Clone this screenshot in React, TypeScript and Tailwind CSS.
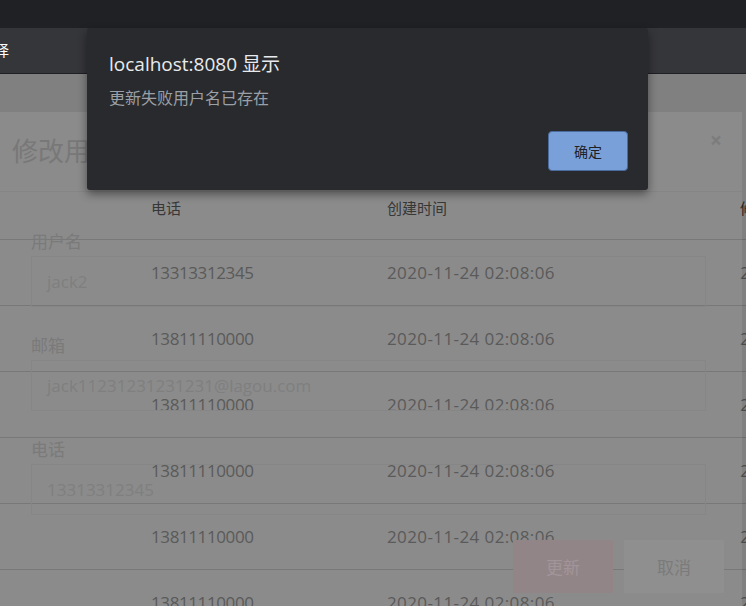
const rows = [
  { phone: "13313312345", time: "2020-11-24 02:08:06" },
  { phone: "13811110000", time: "2020-11-24 02:08:06" },
  { phone: "13811110000", time: "2020-11-24 02:08:06" },
  { phone: "13811110000", time: "2020-11-24 02:08:06" },
  { phone: "13811110000", time: "2020-11-24 02:08:06" },
  { phone: "13811110000", time: "2020-11-24 02:08:06" },
];

const fields = [
  { label: "用户名", value: "jack2", last: false },
  { label: "邮箱", value: "jack11231231231231@lagou.com", last: false },
  { label: "电话", value: "13313312345", last: true },
];

const App = () => {
  return (
    <div className="relative h-[606px] w-full overflow-hidden bg-[#808080] font-['Open_Sans','Noto_Sans_CJK_SC',sans-serif]">
      {/* top bars */}
      <div className="h-[28px] bg-[#202124]" />
      <div className="flex h-[46px] items-center overflow-hidden border-b border-[#1f2023] bg-[#35363a]">
        <span className="-ml-[21px] font-['Noto_Sans_CJK_SC',sans-serif] text-[15px] text-white">选择</span>
      </div>

      {/* Table behind the modal */}
      <div className="pt-[104px]">
        <div className="flex h-[62px] items-center border-b border-[#6b6b6b] font-['Noto_Sans_CJK_SC',sans-serif] text-[15px] text-[#242424]">
          <div className="w-[387px] shrink-0 pl-[151px]">电话</div>
          <div className="w-[353px] shrink-0">创建时间</div>
          <div className="whitespace-nowrap">修改</div>
        </div>
        {rows.map((row, index) => (
          <div
            key={index}
            className="flex h-[66px] items-center border-b border-[#6b6b6b] text-[17px] text-[#4a4a4a]"
          >
            <div className="w-[387px] shrink-0 pl-[151px] tracking-[-0.4px]">{row.phone}</div>
            <div className="w-[353px] shrink-0 tracking-[0.4px]">{row.time}</div>
            <div className="whitespace-nowrap">{row.time}</div>
          </div>
        ))}
      </div>

      {/* Modal (fading in) */}
      <div className="absolute bottom-0 left-0 top-[112px] w-[742px] bg-white/[0.09]">
        {/* Header */}
        <div className="flex h-[80px] items-start justify-between border-b border-[#858585] pl-[12px] pr-[20px] pt-[19px]">
          <h4 className="font-['Noto_Sans_CJK_SC',sans-serif] text-[26px] leading-[38px] text-[#787878]">修改用户</h4>
          <span className="-mt-[1px] text-[21px] font-bold leading-[20px] text-[#7c7c7c]">×</span>
        </div>

        {/* Body */}
        <div className="pl-[31px] pr-[36px] pt-[39px]">
          {fields.map((f) => (
            <div key={f.label} className={f.last ? "mb-[25px]" : "mb-[28px]"}>
              <label className="mb-[5px] block font-['Noto_Sans_CJK_SC',sans-serif] text-[17px] leading-[20px] text-[#7a7a7a]">
                {f.label}
              </label>
              <div className="flex h-[51px] items-center border border-[#868686] pl-[15px] text-[17px] text-[#7f7f7f]">
                {f.value}
              </div>
            </div>
          ))}
        </div>

        {/* Footer buttons */}
        <div className="flex justify-end gap-[11px] pr-[18px] font-['Noto_Sans_CJK_SC',sans-serif] text-[17px]">
          <button className="flex h-[53px] w-[100px] items-center justify-center bg-[#928588] text-[#a2959a]">
            更新
          </button>
          <button className="flex h-[53px] w-[100px] items-center justify-center bg-[#8f8f8f] text-[#7b7b7b]">
            取消
          </button>
        </div>
      </div>

      {/* Browser alert */}
      <div className="absolute left-[87px] top-[28px] h-[162px] w-[561px] rounded-[3px] bg-[#292a2e] pl-[22px] pr-[20px] pt-[23px] shadow-[0_4px_10px_rgba(0,0,0,0.45)]">
        <p className="font-['Open_Sans','Noto_Sans_CJK_SC',sans-serif] text-[19px] leading-[27px] text-[#e8eaed]">
          localhost:8080 显示
        </p>
        <p className="mt-[8px] font-['Noto_Sans_CJK_SC',sans-serif] text-[16px] leading-[23px] text-[#9aa0a6]">
          更新失败用户名已存在
        </p>
        <div className="mt-[22px] flex justify-end">
          <button className="flex h-[40px] w-[80px] items-center justify-center rounded-[4px] border border-[#4b6b9f] bg-[#7aa0da] font-['Noto_Sans_CJK_SC',sans-serif] text-[14px] text-[#1f2024]">
            确定
          </button>
        </div>
      </div>
    </div>
  );
};

export default App;
